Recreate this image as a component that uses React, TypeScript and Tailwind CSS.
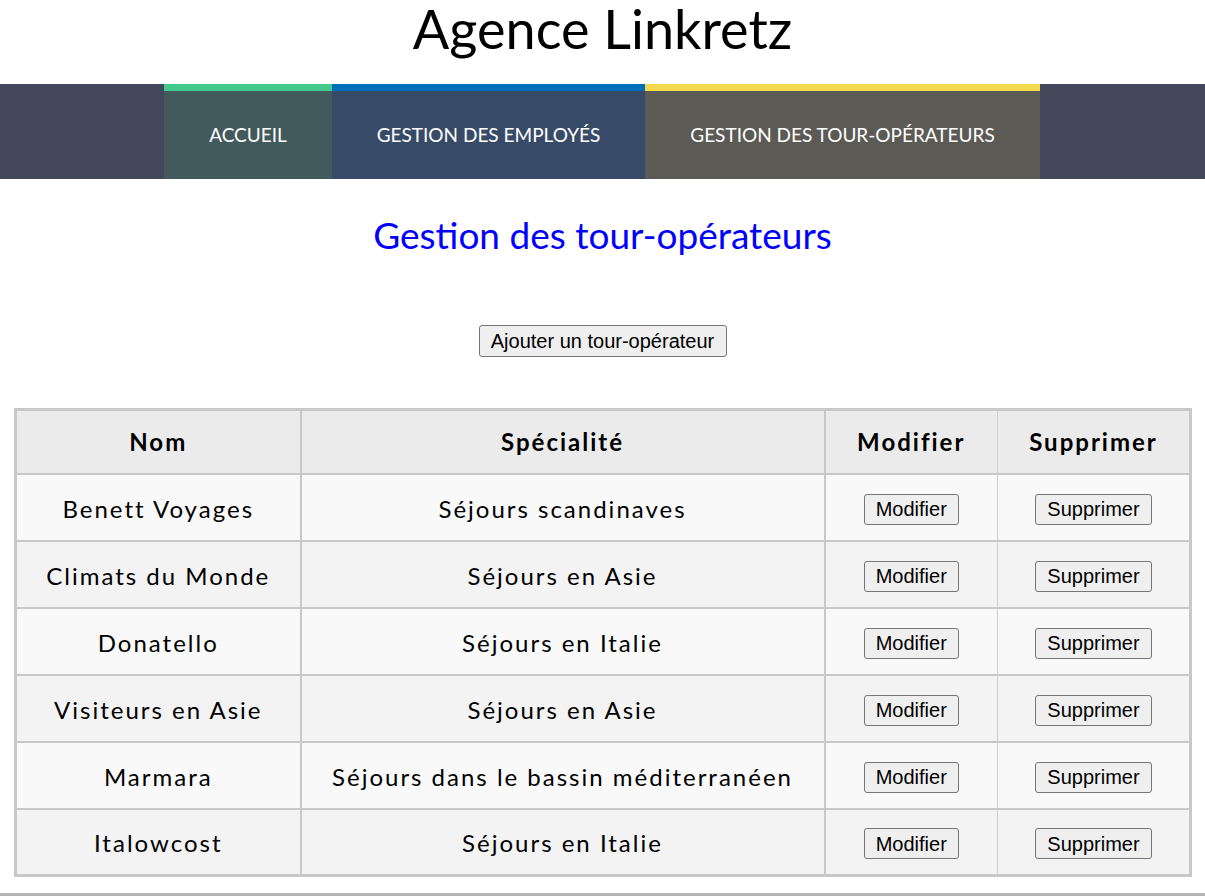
import React from "react";

const rows: [string, string][] = [
  ["Benett Voyages", "Séjours scandinaves"],
  ["Climats du Monde", "Séjours en Asie"],
  ["Donatello", "Séjours en Italie"],
  ["Visiteurs en Asie", "Séjours en Asie"],
  ["Marmara", "Séjours dans le bassin méditerranéen"],
  ["Italowcost", "Séjours en Italie"],
];

const cal = "font-['Lato','Open_Sans',sans-serif]";
const arial = "font-['Liberation_Sans',Arial,sans-serif]";

function Btn({ children, w }: { children: React.ReactNode; w: string }) {
  return (
    <button
      className={`${arial} ${w} h-[31px] text-[20px] leading-none text-black bg-[#efefef] border border-[#767676] rounded-[3px] tracking-normal`}
    >
      {children}
    </button>
  );
}

export default function App() {
  return (
    <div className={`${cal} bg-white min-h-[896px] overflow-hidden`}>
      <div className="h-[84px] flex justify-center">
        <h1 className="text-[54px] leading-[58px] text-black font-normal">Agence Linkretz</h1>
      </div>
      <nav className="h-[95px] bg-[#42475a] flex justify-start pl-[164px]">
        <div className="w-[168px] bg-[#435a5d] border-t-[7px] border-[#45c98a] flex items-center justify-center text-white text-[19px]">
          ACCUEIL
        </div>
        <div className="w-[313px] bg-[#374b69] border-t-[7px] border-[#0070ba] flex items-center justify-center text-white text-[19px]">
          GESTION DES EMPLOYÉS
        </div>
        <div className="w-[395px] bg-[#5c5a55] border-t-[7px] border-[#f2d94e] flex items-center justify-center text-white text-[19px]">
          GESTION DES TOUR-OPÉRATEURS
        </div>
      </nav>
      <h2 className="text-center text-[#0000ff] text-[37px] leading-[44px] mt-[34px]">
        Gestion des tour-opérateurs
      </h2>
      <div className="flex justify-center mt-[68px]">
        <button
          className={`${arial} w-[248px] h-[32px] text-[20px] leading-none text-black bg-[#efefef] border border-[#767676] rounded-[3px]`}
        >
          Ajouter un tour-opérateur
        </button>
      </div>
      <table className="mt-[51px] ml-[14px] w-[1175px] table-fixed border-collapse border-[3px] border-[#c8c8c8] text-[24px] tracking-[2px] text-black">
        <colgroup>
          <col className="w-[285px]" />
          <col className="w-[524px]" />
          <col className="w-[173px]" />
          <col className="w-[193px]" />
        </colgroup>
        <thead>
          <tr className="bg-[#ebebeb] h-[64px]">
            <th className="border-2 border-[#c8c8c8] font-bold">Nom</th>
            <th className="border-2 border-[#c8c8c8] font-bold">Spécialité</th>
            <th className="border-2 border-[#c8c8c8] border-r border-r-[#cfcfcf] font-bold">Modifier</th>
            <th className="border-2 border-[#c8c8c8] border-l border-l-[#cfcfcf] font-bold">Supprimer</th>
          </tr>
        </thead>
        <tbody>
          {rows.map(([n, s], i) => (
            <tr key={n} className={`h-[67px] ${i % 2 === 0 ? "bg-[#f9f9f9]" : "bg-[#f3f3f3]"}`}>
              <td className="border-2 border-[#c8c8c8] text-center pt-[3px]">{n}</td>
              <td className="border-2 border-[#c8c8c8] text-center pt-[3px]">{s}</td>
              <td className="border-2 border-[#c8c8c8] border-r border-r-[#cfcfcf] text-center">
                <Btn w="w-[95px]">Modifier</Btn>
              </td>
              <td className="border-2 border-[#c8c8c8] border-l border-l-[#cfcfcf] text-center">
                <Btn w="w-[117px]">Supprimer</Btn>
              </td>
            </tr>
          ))}
        </tbody>
      </table>
      <div className="mt-[16px] h-[20px] bg-[#b4b4b4]" />
    </div>
  );
}
